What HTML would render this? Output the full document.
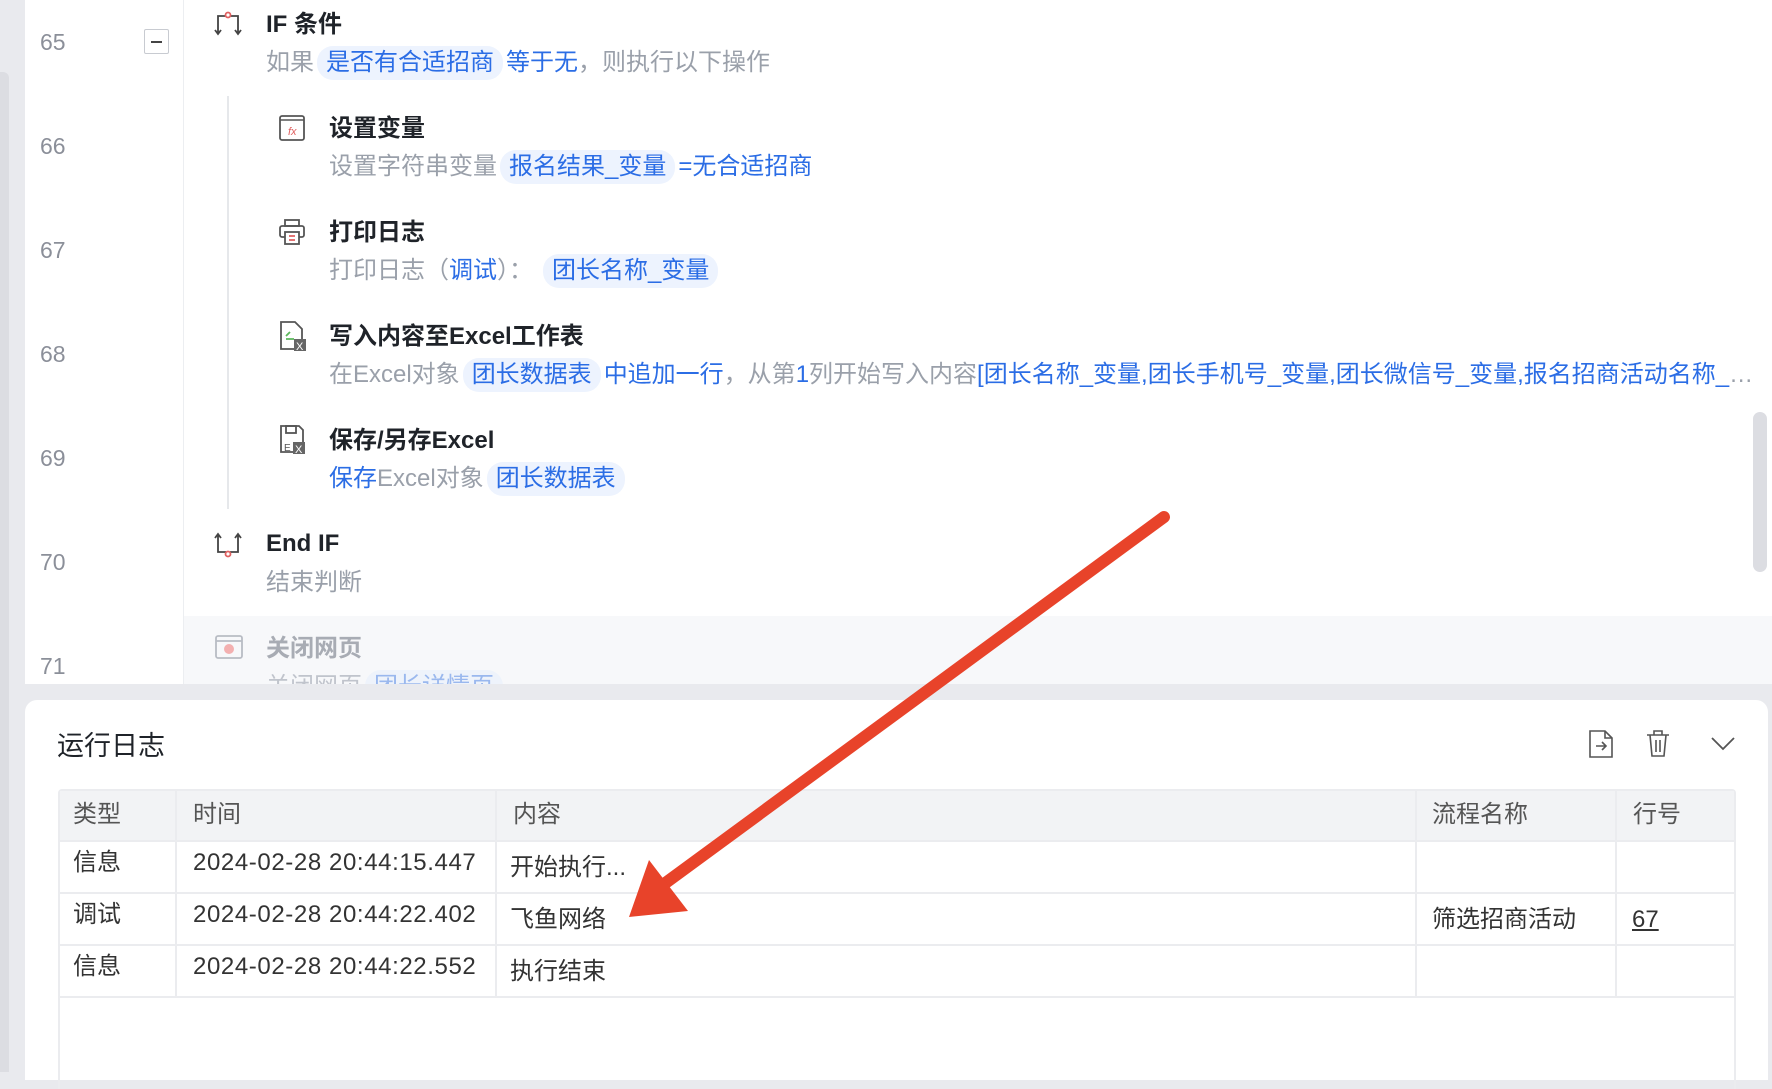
<!DOCTYPE html>
<html><head><meta charset="utf-8"><style>
*{margin:0;padding:0;box-sizing:border-box}
body{width:1772px;height:1072px;overflow:hidden;background:#e9eaee;font-family:"Liberation Sans","Noto Sans CJK SC",sans-serif;position:relative}
.a{position:absolute;white-space:nowrap}
.num{left:40px;font-size:23px;color:#8b8f99;line-height:30px}
.t{font-size:24px;font-weight:bold;color:#1f2329;line-height:32px}
.s{font-size:24px;color:#9aa0aa;line-height:34px}
.b{color:#2b6de5}
.chip{display:inline-block;background:#edf3fe;color:#2b6de5;border-radius:16px;padding:0 9px;line-height:34px;margin:0 3px}
.th,.td{position:absolute;font-size:24px;line-height:30px;color:#333}
.th{color:#555}
.ts{letter-spacing:0.6px}
</style></head><body>
<div class="a" style="left:0;top:72px;width:9px;height:1000px;background:#dcdde2;border-radius:0 6px 0 0"></div>
<div class="a" style="left:25px;top:0;width:1747px;height:684px;background:#fff"></div>
<div class="a" style="left:183px;top:0;width:1px;height:684px;background:#eceef1"></div>
<div class="a" style="left:184px;top:616px;width:1588px;height:68px;background:#f7f8fa"></div>
<div class="a" style="left:1753px;top:412px;width:14px;height:160px;background:#dcdde2;border-radius:7px"></div>
<div class="a" style="left:227px;top:96px;width:2px;height:413px;background:#e6e8eb"></div>

<div class="a num" style="top:27px">65</div>
<div class="a num" style="top:131px">66</div>
<div class="a num" style="top:235px">67</div>
<div class="a num" style="top:339px">68</div>
<div class="a num" style="top:443px">69</div>
<div class="a num" style="top:547px">70</div>
<div class="a num" style="top:651px">71</div>
<div class="a" style="left:144px;top:29px;width:25px;height:25px;border:1px solid #c8cbd1;border-radius:2px"><div style="position:absolute;left:6px;top:11px;width:11px;height:2px;background:#444"></div></div>

<!-- 65 -->
<svg class="a" style="left:214px;top:10px" width="28" height="28" viewBox="0 0 28 28" fill="none" stroke="#444" stroke-width="1.8"><path d="M4 24V6h8M24 24V6h-8M1 20l3 4 3-4M21 20l3 4 3-4"/><circle cx="14" cy="5" r="2.5" stroke="#e06060"/></svg>
<div class="a t" style="left:266px;top:9px">IF 条件</div>
<div class="a s" style="left:266px;top:46px">如果<span class="chip">是否有合适招商</span><span class="b">等于无</span>，则执行以下操作</div>
<!-- 66 -->
<svg class="a" style="left:278px;top:114px" width="28" height="28" viewBox="0 0 28 28" fill="none"><rect x="2" y="2" width="24" height="24" rx="2" stroke="#555" stroke-width="1.8"/><path d="M2 6h24" stroke="#555" stroke-width="1.5"/><text x="10" y="21" font-size="11" fill="#e06060" font-style="italic">fx</text></svg>
<div class="a t" style="left:329px;top:113px">设置变量</div>
<div class="a s" style="left:329px;top:150px">设置字符串变量<span class="chip">报名结果_变量</span><span class="b">=无合适招商</span></div>
<!-- 67 -->
<svg class="a" style="left:278px;top:218px" width="28" height="28" viewBox="0 0 28 28" fill="none" stroke="#555" stroke-width="1.8"><rect x="7" y="2" width="14" height="6"/><rect x="2" y="8" width="24" height="11" rx="2"/><rect x="7" y="14" width="14" height="12" fill="#fff"/><path d="M11 18h6M11 22h6" stroke="#e06060"/></svg>
<div class="a t" style="left:329px;top:217px">打印日志</div>
<div class="a s" style="left:329px;top:254px">打印日志（<span class="b">调试</span>）：<span class="chip" style="margin-left:10px">团长名称_变量</span></div>
<!-- 68 -->
<svg class="a" style="left:278px;top:320px" width="30" height="32" viewBox="0 0 30 32" fill="none" stroke="#555" stroke-width="1.8"><path d="M3 2h14l7 7v20H3z"/><path d="M8 16l4-4M8 19h8" stroke="#5cb85c"/><rect x="16" y="19" width="12" height="12" fill="#666" stroke="none"/><text x="18" y="30" font-size="11" fill="#fff" stroke="none">X</text></svg>
<div class="a t" style="left:329px;top:321px">写入内容至Excel工作表</div>
<div class="a s" style="left:329px;top:358px;width:1432px;overflow:hidden;text-overflow:ellipsis">在Excel对象<span class="chip">团长数据表</span><span class="b">中追加一行</span>，从第<span class="b">1</span>列开始写入内容<span class="b">[团长名称_变量,团长手机号_变量,团长微信号_变量,报名招商活动名称_变量,报名时间_变量]</span></div>
<!-- 69 -->
<svg class="a" style="left:278px;top:424px" width="30" height="32" viewBox="0 0 30 32" fill="none" stroke="#555" stroke-width="1.8"><path d="M3 2h18l4 4v22H3z"/><rect x="8" y="2" width="10" height="7"/><text x="6" y="27" font-size="10" fill="#555" stroke="none">E</text><rect x="15" y="18" width="12" height="12" fill="#666" stroke="none"/><text x="17" y="29" font-size="11" fill="#fff" stroke="none">X</text></svg>
<div class="a t" style="left:329px;top:425px">保存/另存Excel</div>
<div class="a s" style="left:329px;top:462px"><span class="b">保存</span>Excel对象<span class="chip">团长数据表</span></div>
<!-- 70 -->
<svg class="a" style="left:214px;top:530px" width="28" height="30" viewBox="0 0 28 30" fill="none" stroke="#444" stroke-width="1.8"><path d="M4 4v18h8M24 4v18h-8M1 8l3-4 3 4M21 8l3-4 3 4"/><circle cx="14" cy="24" r="2.5" stroke="#e06060"/></svg>
<div class="a t" style="left:266px;top:528px">End IF</div>
<div class="a s" style="left:266px;top:566px">结束判断</div>
<!-- 71 -->
<svg class="a" style="left:214px;top:634px" width="30" height="28" viewBox="0 0 30 28" fill="none" stroke="#b8bcc4" stroke-width="1.8"><rect x="2" y="2" width="26" height="22" rx="2"/><path d="M2 7h26"/><circle cx="15" cy="15" r="5" fill="#f3b0b0" stroke="none"/></svg>
<div class="a t" style="left:266px;top:633px;color:#a8acb4">关闭网页</div>
<div class="a s" style="left:266px;top:670px;color:#c0c4cc">关闭网页<span class="chip" style="background:#eef3fb;color:#9ab8ee">团长详情页</span></div>
<div class="a" style="left:25px;top:684px;width:1747px;height:388px;background:#e9eaee"></div>
<div class="a" style="left:0;top:684px;width:9px;height:388px;background:#dcdde2"></div>

<!-- log panel -->
<div class="a" style="left:25px;top:700px;width:1743px;height:380px;background:#fff;border-radius:12px 12px 0 0"></div>
<div class="a" style="left:57px;top:729px;font-size:27px;color:#1f2329;line-height:34px">运行日志</div>
<svg class="a" style="left:1588px;top:729px" width="26" height="30" viewBox="0 0 26 30" fill="none" stroke="#555" stroke-width="1.6"><path d="M2 2h15l7 7v19H2z"/><path d="M17 2v7h7M8 17h10M14 13l4 4-4 4"/></svg>
<svg class="a" style="left:1645px;top:729px" width="26" height="30" viewBox="0 0 26 30" fill="none" stroke="#555" stroke-width="1.6"><path d="M2 6h22M9 6V2h8v4M5 6l2 21h12l2-21M11 11v12M15 11v12"/></svg>
<svg class="a" style="left:1710px;top:736px" width="26" height="16" viewBox="0 0 26 16" fill="none" stroke="#555" stroke-width="1.8"><path d="M2 2l11 11L24 2"/></svg>

<div class="a" style="left:58px;top:789px;width:1678px;height:300px;border:2px solid #ebecef;border-bottom:none;border-radius:4px 4px 0 0"></div>
<div class="a" style="left:60px;top:791px;width:1674px;height:49px;background:#f2f3f5"></div>
<div class="a" style="left:60px;top:840px;width:1674px;height:2px;background:#ebecef"></div>
<div class="a" style="left:60px;top:892px;width:1674px;height:2px;background:#ebecef"></div>
<div class="a" style="left:60px;top:944px;width:1674px;height:2px;background:#ebecef"></div>
<div class="a" style="left:60px;top:996px;width:1674px;height:2px;background:#ebecef"></div>
<div class="a" style="left:175px;top:791px;width:2px;height:207px;background:#ebecef"></div>
<div class="a" style="left:495px;top:791px;width:2px;height:207px;background:#ebecef"></div>
<div class="a" style="left:1415px;top:791px;width:2px;height:207px;background:#ebecef"></div>
<div class="a" style="left:1615px;top:791px;width:2px;height:207px;background:#ebecef"></div>

<div class="th" style="left:73px;top:800px">类型</div>
<div class="th" style="left:193px;top:800px">时间</div>
<div class="th" style="left:513px;top:800px">内容</div>
<div class="th" style="left:1432px;top:800px">流程名称</div>
<div class="th" style="left:1633px;top:800px">行号</div>

<div class="td" style="left:73px;top:848px">信息</div>
<div class="td ts" style="left:193px;top:848px">2024-02-28 20:44:15.447</div>
<div class="td" style="left:510px;top:853px">开始执行...</div>
<div class="td" style="left:73px;top:900px">调试</div>
<div class="td ts" style="left:193px;top:900px">2024-02-28 20:44:22.402</div>
<div class="td" style="left:510px;top:905px">飞鱼网络</div>
<div class="td" style="left:1432px;top:905px">筛选招商活动</div>
<div class="td" style="left:1632px;top:905px;text-decoration:underline">67</div>
<div class="td" style="left:73px;top:952px">信息</div>
<div class="td ts" style="left:193px;top:952px">2024-02-28 20:44:22.552</div>
<div class="td" style="left:510px;top:957px">执行结束</div>

<svg class="a" style="left:0;top:0" width="1772" height="1072"><path d="M1164 517L660 887" stroke="#e8432a" stroke-width="12" stroke-linecap="round"/><path d="M649 860L629 917L688 911Z" fill="#e8432a"/></svg>
</body></html>
